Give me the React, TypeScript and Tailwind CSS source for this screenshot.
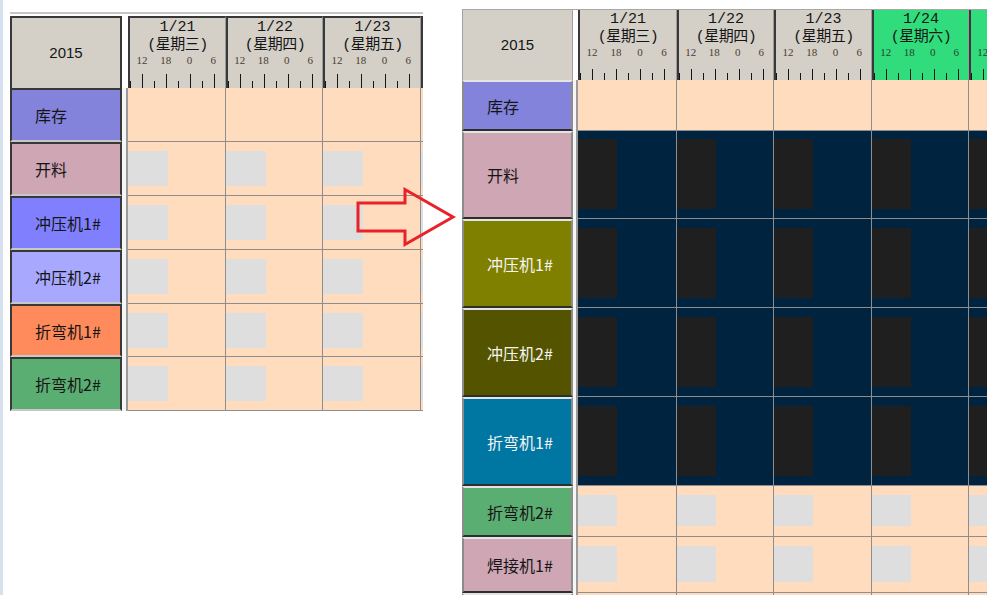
import React from "react";

type Row = {
  label: string;
  h: string;
  head: string;
  ink: string;
  cell: string;
  pad?: string;
  block?: string;
};

const LEFT_COLS = ["w-[98px]", "w-[97px]", "w-[98px]", "w-[97px]"];
const RIGHT_COLS = ["w-[99px]", "w-[97px]", "w-[98px]", "w-[97px]", "w-[97px]"];

const PEACH = "bg-[#fedcbd]";
const NAVY = "bg-[#00233f]";

const leftRows: Row[] = [
  { label: "库存", h: "h-[54px]", head: "bg-[#8383db]", ink: "text-[#151515]", cell: PEACH },
  { label: "开料", h: "h-[54px]", head: "bg-[#cea6b4]", ink: "text-[#151515]", cell: PEACH, pad: "pt-[9px]", block: "w-[40px] h-[35px] bg-[#dedede]" },
  { label: "冲压机1#", h: "h-[54px]", head: "bg-[#8080ff]", ink: "text-[#151515]", cell: PEACH, pad: "pt-[9px]", block: "w-[40px] h-[35px] bg-[#dedede]" },
  { label: "冲压机2#", h: "h-[54px]", head: "bg-[#a8a8ff]", ink: "text-[#151515]", cell: PEACH, pad: "pt-[9px]", block: "w-[40px] h-[35px] bg-[#dedede]" },
  { label: "折弯机1#", h: "h-[53px]", head: "bg-[#ff8a5b]", ink: "text-[#151515]", cell: PEACH, pad: "pt-[9px]", block: "w-[40px] h-[35px] bg-[#dedede]" },
  { label: "折弯机2#", h: "h-[54px]", head: "bg-[#5bae72]", ink: "text-[#151515]", cell: PEACH, pad: "pt-[9px]", block: "w-[40px] h-[35px] bg-[#dedede]" },
];

const rightRows: Row[] = [
  { label: "库存", h: "h-[51px]", head: "bg-[#8383db]", ink: "text-[#151515]", cell: PEACH },
  { label: "开料", h: "h-[88px]", head: "bg-[#cea6b4]", ink: "text-[#151515]", cell: NAVY, pad: "pt-[8px]", block: "w-[39px] h-[70px] bg-[#1f1f1f]" },
  { label: "冲压机1#", h: "h-[89px]", head: "bg-[#808000]", ink: "text-[#f4f4f4]", cell: NAVY, pad: "pt-[9px]", block: "w-[39px] h-[70px] bg-[#1f1f1f]" },
  { label: "冲压机2#", h: "h-[89px]", head: "bg-[#545400]", ink: "text-[#f4f4f4]", cell: NAVY, pad: "pt-[9px]", block: "w-[39px] h-[70px] bg-[#1f1f1f]" },
  { label: "折弯机1#", h: "h-[89px]", head: "bg-[#0076a3]", ink: "text-[#f4f4f4]", cell: NAVY, pad: "pt-[9px]", block: "w-[39px] h-[70px] bg-[#1f1f1f]" },
  { label: "折弯机2#", h: "h-[51px]", head: "bg-[#5bae72]", ink: "text-[#151515]", cell: PEACH, pad: "pt-[9px]", block: "w-[39px] h-[31px] bg-[#dedede]" },
  { label: "焊接机1#", h: "h-[56px]", head: "bg-[#cea6b4]", ink: "text-[#151515]", cell: PEACH, pad: "pt-[9px]", block: "w-[39px] h-[36px] bg-[#dedede]" },
  { label: "焊接机2#", h: "h-[54px]", head: "bg-[#d4d0c8]", ink: "text-[#151515]", cell: PEACH },
];

const leftDates = [
  { d: "1/21", w: "(星期三)" },
  { d: "1/22", w: "(星期四)" },
  { d: "1/23", w: "(星期五)" },
  { d: "1/24", w: "(星期六)" },
];

const rightDates = [
  { d: "1/21", w: "(星期三)" },
  { d: "1/22", w: "(星期四)" },
  { d: "1/23", w: "(星期五)" },
  { d: "1/24", w: "(星期六)", green: true },
  { d: "1/25", w: "(星期日)", green: true },
];

// ruler under each day: tick every 3 hours, long ones on the labelled hours
const Ruler = ({ h }: { h: number }) => (
  <svg width="96" height={h} className="block shrink-0">
    {[0, 12, 24, 36, 48, 60, 72, 84].map((x, i) => (
      <line
        key={x}
        x1={x + 0.5}
        x2={x + 0.5}
        y1={i % 2 ? 1 : h - 7}
        y2={h}
        stroke="#151515"
        strokeWidth="1"
      />
    ))}
  </svg>
);

const DateHead = ({
  d,
  w,
  green,
  width,
  left,
}: {
  d: string;
  w: string;
  green?: boolean;
  width: string;
  left: boolean;
}) => (
  <div
    className={`${width} shrink-0 flex flex-col border-l-2 border-l-[#383838] border-r border-r-[#9c9c9c] ${
      left ? "border-t-2 border-t-[#383838]" : ""
    } ${green ? "bg-[#31dc7c]" : "bg-[#d4d0c8]"} text-[#151515] font-['Liberation_Mono','Noto_Sans_CJK_SC',monospace]`}
  >
    <div className="text-center text-[15px] leading-[19px] whitespace-nowrap">{d}</div>
    <div className="text-center text-[15px] leading-[18px] whitespace-nowrap tracking-[-0.5px]">{w}</div>
    <div
      className={`flex text-[11px] ${left ? "leading-[11px]" : "leading-[10px]"} ${
        green ? "text-[#24432f]" : "text-[#4a3c30]"
      } font-['Liberation_Serif',serif]`}
    >
      <span className="w-[24px] text-center">12</span>
      <span className="w-[24px] text-center">18</span>
      <span className="w-[24px] text-center">0</span>
      <span className="w-[24px] text-center">6</span>
    </div>
    <div className="mt-auto">
      <Ruler h={left ? 15 : 12} />
    </div>
  </div>
);

const GridRow = ({
  row,
  cols,
  headW,
  gapW,
  left,
}: {
  row: Row;
  cols: string[];
  headW: string;
  gapW: string;
  left: boolean;
}) => (
  <div className={`flex ${row.h}`}>
    <div
      className={`${headW} shrink-0 flex items-center pl-[23px] ${row.head} ${row.ink} border-2 ${
        left ? "border-[#383838] border-b-[#c8c8c8]" : "border-[#8c8c8c] border-t-[#e4e4e4] border-b-[#2e2e2e]"
      } text-[16px] font-['Noto_Sans_CJK_SC',sans-serif] whitespace-nowrap`}
    >
      {row.label}
    </div>
    <div className={`${gapW} shrink-0 bg-[#f6f6f6] border-r-2 border-[#9a9a9a]`} />
    {cols.map((c, i) => (
      <div key={i} className={`${c} shrink-0 border-r border-b border-[#8e8e8e] ${row.cell} ${row.pad ?? ""}`}>
        {row.block && <div className={row.block} />}
      </div>
    ))}
  </div>
);

const App = () => {
  return (
    <div className="relative w-[995px] h-[595px] bg-white overflow-hidden flex items-start">
      {/* window edge */}
      <div className="w-[3px] self-stretch bg-[#d6e1ef] shrink-0" />

      {/* before */}
      <div className="ml-[7px] mt-[12px] w-[413px] shrink-0 overflow-hidden">
        <div className="flex h-[76px] border-t-2 border-[#c6c6c6] pt-[2px]">
          <div className="w-[112px] shrink-0 flex items-center justify-center border-2 border-b-0 border-[#383838] bg-[#d4d0c8] text-[15px] text-[#151515] font-['Liberation_Sans',sans-serif]">
            2015
          </div>
          <div className="w-[6px] shrink-0 bg-white" />
          {leftDates.map((x, i) => (
            <DateHead key={x.d} d={x.d} w={x.w} width={LEFT_COLS[i]} left />
          ))}
        </div>
        {leftRows.map((r) => (
          <GridRow key={r.label} row={r} cols={LEFT_COLS} headW="w-[112px]" gapW="w-[6px]" left />
        ))}
      </div>

      {/* after */}
      <div className="ml-[39px] mt-[9px] w-[525px] h-[586px] shrink-0 overflow-hidden">
        <div className="flex h-[71px] border-t border-[#a8a8a8]">
          <div className="w-[111px] shrink-0 flex items-center justify-center border-x border-[#a0a0a0] bg-[#d4d0c8] text-[15px] text-[#151515] font-['Liberation_Sans',sans-serif]">
            2015
          </div>
          <div className="w-[5px] shrink-0 bg-white" />
          {rightDates.map((x, i) => (
            <DateHead key={x.d} d={x.d} w={x.w} green={x.green} width={RIGHT_COLS[i]} left={false} />
          ))}
        </div>
        {rightRows.map((r) => (
          <GridRow key={r.label} row={r} cols={RIGHT_COLS} headW="w-[111px]" gapW="w-[5px]" left={false} />
        ))}
      </div>

      {/* arrow between the two states */}
      <svg className="absolute left-0 top-0 pointer-events-none" width="995" height="595">
        <polygon
          points="358,203 405,203 405,189.5 453,217 405,244.5 405,231 358,231"
          fill="none"
          stroke="#e8212a"
          strokeWidth="3"
        />
      </svg>
    </div>
  );
};

export default App;
